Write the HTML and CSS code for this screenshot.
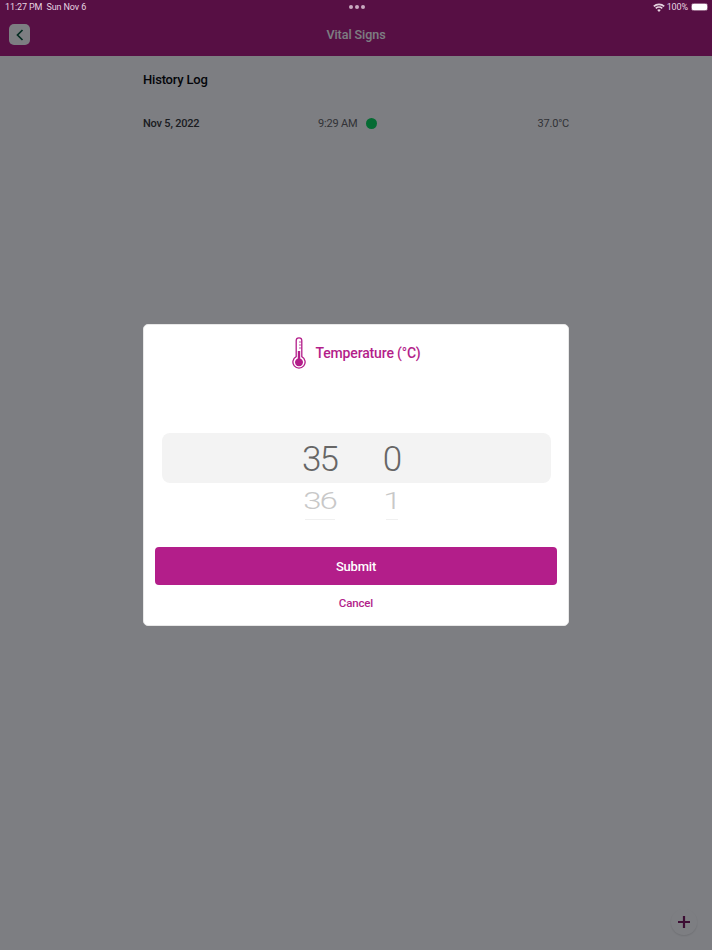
FILE: index.html
```html
<!DOCTYPE html>
<html lang="en">
<head>
<meta charset="utf-8">
<title>Vital Signs</title>
<link rel="stylesheet" href="styles.css">
</head>
<body>
<div class="page">
  <header class="header">
    <div class="status">
      <div class="status-left"><span>11:27 PM</span><span>Sun Nov 6</span></div>
      <div class="status-dots"><i></i><i></i><i></i></div>
      <div class="status-right">
        <svg class="wifi" width="12" height="9" viewBox="0 0 12 9"><path d="M6 9 4.2 7a2.6 2.6 0 0 1 3.6 0zM3.3 6 2.2 4.8a5.6 5.6 0 0 1 7.6 0L8.7 6a4 4 0 0 0-5.4 0zM1.4 4 .2 2.8a8.6 8.6 0 0 1 11.6 0L10.6 4a6.9 6.9 0 0 0-9.2 0z" fill="currentColor"/></svg>
        <span>100%</span>
        <span class="battery"><b></b></span>
      </div>
    </div>
    <div class="nav">
      <button class="back" aria-label="Back">
        <svg width="10" height="12" viewBox="0 0 10 12"><path d="M7.5 1 2.5 6l5 5" fill="none" stroke="currentColor" stroke-width="1.7"/></svg>
      </button>
      <h1 class="title">Vital Signs</h1>
    </div>
  </header>
  <main class="content">
    <h2 class="log-title">History Log</h2>
    <div class="log-row">
      <span class="log-date">Nov 5, 2022</span>
      <span class="log-time">9:29 AM<i class="dot"></i></span>
      <span class="log-temp">37.0°C</span>
    </div>
  </main>
  <button class="fab" aria-label="Add">
    <svg width="12" height="12" viewBox="0 0 12 12"><path d="M6 0v12M0 6h12" stroke="currentColor" stroke-width="2.2"/></svg>
  </button>
  <div class="overlay">
    <section class="modal">
      <div class="modal-head">
        <svg class="thermo" width="14" height="33" viewBox="0 0 14 33">
          <path d="M4.2 19.6V3.6a2.8 2.8 0 0 1 5.6 0v16a6.1 6.1 0 1 1-5.6 0z" fill="none" stroke="currentColor" stroke-width="1.3"/>
          <path d="M5.800 21.500V14h2.400v7.500a4 4 0 1 1-2.400 0z" fill="currentColor"/>
          <path d="M7 5h2.500M7 8h2.500M7 11h2.500" stroke="currentColor" stroke-width=".8"/>
        </svg>
        <h3 class="modal-title">Temperature (°C)</h3>
      </div>
      <div class="picker">
        <div class="picker-row picker-band">
          <span class="num">35</span>
          <span class="num">0</span>
        </div>
        <div class="picker-row picker-next">
          <span class="num">36</span>
          <span class="num">1</span>
        </div>
        <div class="picker-row picker-edge">
          <span class="sliver"></span>
          <span class="sliver sliver-narrow"></span>
        </div>
      </div>
      <button class="submit">Submit</button>
      <button class="cancel">Cancel</button>
    </section>
  </div>
</div>
</body>
</html>
```
FILE: styles.css
```css
* { box-sizing: border-box; }
html, body { margin: 0; height: 100%; }
body { font-family: "Roboto", "Liberation Sans", sans-serif; background: #fff; overflow: hidden; }
button { font: inherit; border: 0; padding: 0; background: none; }
h1, h2, h3 { margin: 0; }

.page { position: relative; width: 712px; height: 950px; background: #fff; overflow: hidden; }

.header { height: 56px; background: #b21d82; color: #fff; }
.status { position: relative; z-index: 2; height: 14px; display: grid; grid-template-columns: 1fr auto 1fr; align-items: center; padding: 0 3px 0 5px; font-size: 9px; letter-spacing: -.1px; color: #e6d4e0; }
.status-left { display: flex; gap: 4px; }
.status-dots { display: flex; gap: 2px; }
.status-dots i { width: 4px; height: 4px; border-radius: 50%; background: #c9a9c0; }
.status-right { display: flex; justify-content: flex-end; align-items: center; gap: 2px; }
.battery { width: 17px; height: 8px; border: 1px solid #9a6a8c; border-radius: 2.500px; display: flex; margin: 0 1px; }
.battery b { flex: 1; background: #fff; border-radius: 1px; }

.nav { height: 42px; display: flex; align-items: center; padding: 0 0 0 9px; }
.back { width: 21px; height: 21px; border-radius: 5px; background: #fff; color: #0b5a3c; display: flex; align-items: center; justify-content: center; margin-top: -1px; }
.title { flex: 1; margin: -2px 30px 0 0; text-align: center; font-size: 12.5px; font-weight: 500; letter-spacing: -.05px; color: #fff; }

.content { width: 426px; margin: 0 auto; padding-top: 16px; }
.log-title { font-size: 13px; font-weight: 500; letter-spacing: -.2px; line-height: 15px; color: #0a0a0a; }
.log-row { display: grid; grid-template-columns: 175px 1fr auto; align-items: center; margin-top: 29px; height: 15px; font-size: 11px; letter-spacing: -.2px; }
.log-date { color: #3a3a3a; font-weight: 500; }
.log-time { display: flex; align-items: center; gap: 8.500px; color: #666; }
.log-temp { color: #666; }
.dot { width: 11px; height: 11px; border-radius: 50%; background: #0cd85e; }

.fab { position: absolute; right: 15px; bottom: 15px; width: 26px; height: 26px; border-radius: 50%; background: #fff; color: #7b1a5e; display: flex; align-items: center; justify-content: center; box-shadow: 0 1px 2px rgba(0,0,0,.12); }

.overlay { position: absolute; inset: 0; z-index: 1; background: rgba(0,2,10,.51); display: flex; align-items: center; justify-content: center; }
.modal { width: 426px; height: 302px; background: #fff; border-radius: 5px; display: flex; flex-direction: column; align-items: center; padding: 12px 12px 0; border: 1px solid #e8e8e8; }
.modal-head { display: flex; align-items: center; gap: 9px; color: #b31e8a; height: 33px; }
.thermo { margin-left: 1px; }
.modal-title { font-size: 14px; font-weight: 500; letter-spacing: -.15px; margin-top: -2px; }

.picker { width: 389px; margin-top: 63px; }
.picker-row { display: grid; grid-template-columns: 50px 94px; justify-items: center; padding-left: 133px; }
.picker-band { height: 50px; padding-top: 2px; background: #f3f3f3; border-radius: 8px; align-items: center; }
.picker-next { height: 36px; padding-bottom: 2px; align-items: center; }
.picker-edge { height: 2px; }
.num { font-weight: 300; letter-spacing: -2px; line-height: 1; }
.picker-band .num { font-size: 35px; color: #666; }
.picker-next .num { font-size: 33px; color: #c8c8c8; transform: scaleY(.72); }
.sliver { width: 30px; height: 1px; background: #f0f0f0; }
.sliver-narrow { width: 12px; }

.submit { width: 402px; height: 38px; margin-top: 26px; background: #b31e8a; color: #fff; border-radius: 4px; font-size: 13px; font-weight: 500; letter-spacing: -.2px; flex: none; }
.cancel { margin-top: 11px; color: #b31e8a; font-size: 11.5px; font-weight: 500; letter-spacing: -.15px; }
```
